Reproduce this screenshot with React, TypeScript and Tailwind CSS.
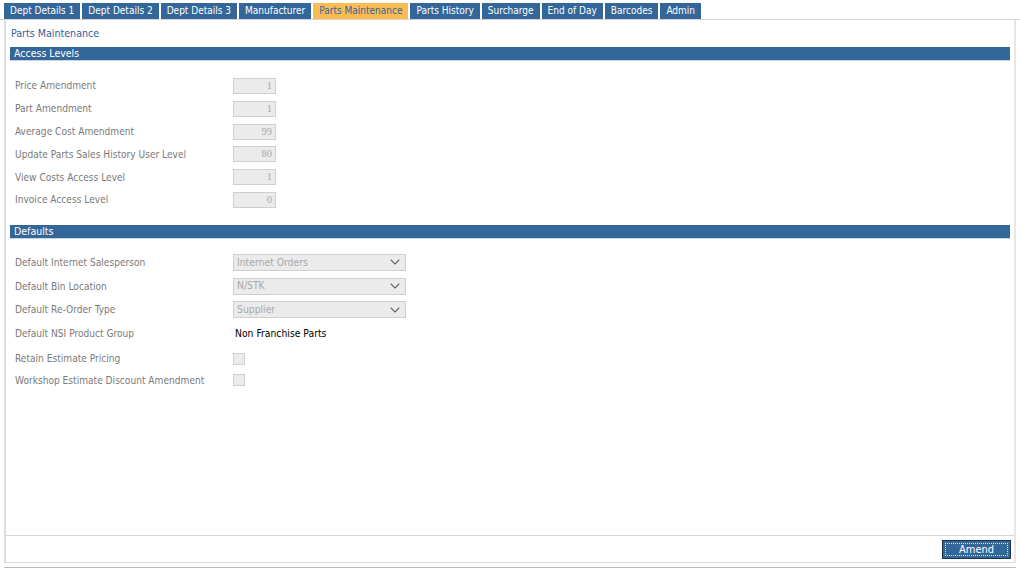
import { ChevronDown } from "lucide-react";

const tabs = [
  "Dept Details 1",
  "Dept Details 2",
  "Dept Details 3",
  "Manufacturer",
  "Parts Maintenance",
  "Parts History",
  "Surcharge",
  "End of Day",
  "Barcodes",
  "Admin",
];

const accessLevels = [
  { label: "Price Amendment", value: "1" },
  { label: "Part Amendment", value: "1" },
  { label: "Average Cost Amendment", value: "99" },
  { label: "Update Parts Sales History User Level", value: "80" },
  { label: "View Costs Access Level", value: "1" },
  { label: "Invoice Access Level", value: "0" },
];

const selects = [
  { label: "Default Internet Salesperson", value: "Internet Orders" },
  { label: "Default Bin Location", value: "N/STK" },
  { label: "Default Re-Order Type", value: "Supplier" },
];

function SectionBar({ title }: { title: string }) {
  return (
    <div className="mx-[4px] h-[13px] bg-[#336699] pl-[4px] text-[10.5px] leading-[13px] text-white shadow-[0_1px_0_#c9d6e3]">
      {title}
    </div>
  );
}

function Label({ children }: { children: string }) {
  return <div className="w-[218px] shrink-0 text-[10.1px] text-[#7a7a7a]">{children}</div>;
}

export default function App() {
  return (
    <div className="h-[569px] w-[1020px] bg-white font-['DejaVu_Sans_Condensed','DejaVu_Sans',sans-serif] text-[11px]">
      <div className="flex h-[20px] items-end border-b border-[#d4d4d4] pl-[4px] pr-[4px]">
        {tabs.map((t) => (
          <div
            key={t}
            className={
              t === "Parts Maintenance"
                ? "mr-[2px] h-[16px] bg-[#f9bc53] px-[6px] text-[10px] leading-[16px] text-[#336699]"
                : "mr-[2px] h-[16px] bg-[#336699] px-[6px] text-[10px] leading-[16px] text-white"
            }
          >
            {t}
          </div>
        ))}
      </div>

      <div className="mx-[4px] flex h-[543px] flex-col border-x-2 border-b border-[#dcdcdc] border-r-[#e6e6e6]">
        <div className="flex-1">
          <div className="px-[5px] pt-[6px] pb-[7px] text-[10.6px] leading-[14px] text-[#2f6299]">
            Parts Maintenance
          </div>
          <SectionBar title="Access Levels" />

          <div className="flex flex-col gap-[6.8px] pt-[18px] pl-[9px]">
            {accessLevels.map((r) => (
              <div key={r.label} className="flex h-[16px] items-center">
                <Label>{r.label}</Label>
                <div className="h-[16px] w-[43px] border border-[#cfcfcf] bg-[#ebebeb] pr-[3px] text-right text-[10.5px] leading-[14px] text-[#a8a8a8] font-['Liberation_Serif',serif]">
                  {r.value}
                </div>
              </div>
            ))}
          </div>

          <div className="mt-[17px]">
            <SectionBar title="Defaults" />
          </div>

          <div className="flex flex-col gap-[6.7px] pt-[16px] pl-[9px]">
            {selects.map((s) => (
              <div key={s.label} className="flex h-[17px] items-center">
                <Label>{s.label}</Label>
                <div className="flex h-[17px] w-[173px] items-center justify-between border border-[#cfcfcf] bg-[#ebebeb] pl-[3px] pr-[2px] text-[10.3px] text-[#a8a8a8]">
                  <span>{s.value}</span>
                  <ChevronDown size={16} strokeWidth={1.6} className="text-[#666]" />
                </div>
              </div>
            ))}
            <div className="flex h-[17px] items-center">
              <Label>Default NSI Product Group</Label>
              <div className="pl-[2px] text-[10.3px] text-black">Non Franchise Parts</div>
            </div>
            <div className="mt-[2px] flex h-[16px] items-center">
              <Label>Retain Estimate Pricing</Label>
              <div className="h-[12px] w-[12px] border border-[#cfcfcf] bg-[#ebebeb]" />
            </div>
            <div className="-mt-[1px] flex h-[16px] items-center">
              <Label>Workshop Estimate Discount Amendment</Label>
              <div className="h-[12px] w-[12px] border border-[#cfcfcf] bg-[#ebebeb]" />
            </div>
          </div>
        </div>

        <div className="flex h-[27px] items-center justify-end border-t border-[#d6d6d6] pr-[3px]">
          <button className="h-[19px] w-[69px] border border-[#1b2f45] bg-[#336699] p-[2px]">
            <div className="flex h-full w-full items-center justify-center border border-dotted border-[#d8e2ec] text-[11px] leading-none text-white">
              Amend
            </div>
          </button>
        </div>
      </div>
      <div className="mx-[4px] mt-[4px] h-[1px] bg-[#bdbdbd]" />
    </div>
  );
}
